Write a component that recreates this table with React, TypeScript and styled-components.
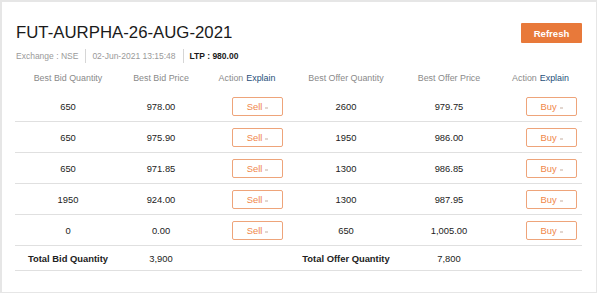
import { Fragment } from 'react'
import styled, { createGlobalStyle } from 'styled-components'

const GlobalStyle = createGlobalStyle`
  html, body {
    margin: 0;
    padding: 0;
    background: #fff;
    font-family: "Liberation Sans", Arial, sans-serif;
  }
`

const Card = styled.div`
  box-sizing: border-box;
  width: 597px;
  height: 293px;
  border-style: solid;
  border-color: #e6e6e6;
  border-width: 2px 1px 1px 2px;
  padding: 21px 14px 0 13px;
  background: #fff;
`

const TopBar = styled.div`
  display: flex;
  justify-content: space-between;
  align-items: flex-start;
`

const TitleBlock = styled.div`
  display: flex;
  flex-direction: column;
  padding-left: 1px;
`

const Title = styled.h1`
  margin: 0;
  font-size: 16.8px;
  line-height: 19px;
  font-weight: normal;
  color: #1a1a1a;
`

const Meta = styled.div`
  display: flex;
  align-items: center;
  margin-top: 7px;
  height: 14px;
`

const MetaItem = styled.span<{ $strong?: boolean }>`
  font-size: 8.5px;
  color: ${(p) => (p.$strong ? '#1a1a1a' : '#9a9a9a')};
  font-weight: ${(p) => (p.$strong ? 'bold' : 'normal')};
`

const MetaDivider = styled.span`
  width: 1px;
  height: 14px;
  background: #d6d6d6;
  margin: 0 6px 0 7px;
`

const RefreshButton = styled.button`
  width: 61px;
  height: 20px;
  border: none;
  border-radius: 1px;
  background: #e8793a;
  color: #fff;
  font-family: inherit;
  font-size: 9.6px;
  font-weight: bold;
  padding: 0;
  cursor: pointer;
`

const Table = styled.div`
  display: grid;
  grid-template-columns: 106px 80px 92px 106px 100px 83px;
  margin-top: 6px;
`

const HeadCell = styled.div`
  height: 22px;
  display: flex;
  align-items: center;
  justify-content: center;
  padding-bottom: 4px;
  box-sizing: border-box;
  font-size: 8.9px;
  color: #8a8a8a;
  white-space: nowrap;
`

const ExplainLink = styled.span`
  color: #1f4f7a;
  margin-left: 3px;
`

const Cell = styled.div<{ $bold?: boolean; $total?: boolean }>`
  height: ${(p) => (p.$total ? '24px' : '30px')};
  border-bottom: 1px solid #e0e0e0;
  display: flex;
  align-items: center;
  justify-content: center;
  font-size: 9.4px;
  color: #222;
  font-weight: ${(p) => (p.$bold ? 'bold' : 'normal')};
  white-space: nowrap;
`

const ActionCell = styled(Cell)<{ $offset: number }>`
  justify-content: flex-start;
  padding-left: ${(p) => p.$offset}px;
`

const TradeButton = styled.button`
  box-sizing: border-box;
  width: 51px;
  height: 19px;
  border: 1px solid #eea47a;
  border-radius: 2px;
  background: #fff;
  color: #f0874a;
  font-family: inherit;
  font-size: 9.4px;
  padding: 0;
  display: flex;
  align-items: center;
  justify-content: center;
  gap: 3px;
  cursor: pointer;
`

const TinyMark = styled.span`
  width: 3px;
  height: 2px;
  margin-top: 3px;
  background: #e2d6cf;
`

const rows = [
  { bidQty: '650', bidPrice: '978.00', offerQty: '2600', offerPrice: '979.75' },
  { bidQty: '650', bidPrice: '975.90', offerQty: '1950', offerPrice: '986.00' },
  { bidQty: '650', bidPrice: '971.85', offerQty: '1300', offerPrice: '986.85' },
  { bidQty: '1950', bidPrice: '924.00', offerQty: '1300', offerPrice: '987.95' },
  { bidQty: '0', bidPrice: '0.00', offerQty: '650', offerPrice: '1,005.00' },
]

const App = () => {
  return (
    <>
      <GlobalStyle />
      <Card>
        <TopBar>
          <TitleBlock>
            <Title>FUT-AURPHA-26-AUG-2021</Title>
            <Meta>
              <MetaItem>Exchange : NSE</MetaItem>
              <MetaDivider />
              <MetaItem>02-Jun-2021 13:15:48</MetaItem>
              <MetaDivider />
              <MetaItem $strong>LTP : 980.00</MetaItem>
            </Meta>
          </TitleBlock>
          <RefreshButton>Refresh</RefreshButton>
        </TopBar>

        <Table>
          <HeadCell>Best Bid Quantity</HeadCell>
          <HeadCell>Best Bid Price</HeadCell>
          <HeadCell>
            Action<ExplainLink>Explain</ExplainLink>
          </HeadCell>
          <HeadCell>Best Offer Quantity</HeadCell>
          <HeadCell>Best Offer Price</HeadCell>
          <HeadCell>
            Action<ExplainLink>Explain</ExplainLink>
          </HeadCell>

          {rows.map((r, i) => (
            <Fragment key={i}>
              <Cell>{r.bidQty}</Cell>
              <Cell>{r.bidPrice}</Cell>
              <ActionCell $offset={31}>
                <TradeButton>
                  Sell
                  <TinyMark />
                </TradeButton>
              </ActionCell>
              <Cell>{r.offerQty}</Cell>
              <Cell>{r.offerPrice}</Cell>
              <ActionCell $offset={27}>
                <TradeButton>
                  Buy
                  <TinyMark />
                </TradeButton>
              </ActionCell>
            </Fragment>
          ))}

          <Cell $total $bold>Total Bid Quantity</Cell>
          <Cell $total>3,900</Cell>
          <Cell $total />
          <Cell $total $bold>Total Offer Quantity</Cell>
          <Cell $total>7,800</Cell>
          <Cell $total />
        </Table>
      </Card>
    </>
  )
}

export default App
